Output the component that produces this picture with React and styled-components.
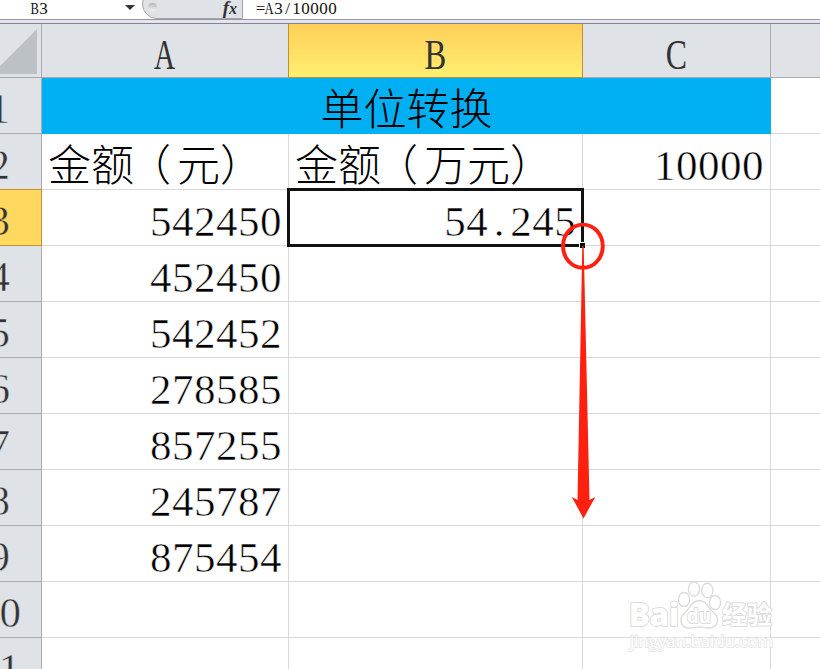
import React from "react";
import styled, { createGlobalStyle } from "styled-components";

const colors = {
  header: "#dfe2e7",
  headerLine: "#a7abb1",
  gridLine: "#d9d9d9",
  active: "#ffd95f",
  activeLine: "#c48e35",
  title: "#00b0f2",
  mark: "#ff2010",
};

const serif = `"Liberation Serif", "Noto Sans CJK SC", serif`;

const columns = [
  { name: "A", scale: 0.68 },
  { name: "B", scale: 0.76, active: true },
  { name: "C", scale: 0.74 },
  { name: "" },
];

const rows = [
  { id: 1, title: "单位转换" },
  { id: 2, a: "金额（元）", b: "金额（万元）", c: "10000", text: true },
  { id: 3, a: "542450", b: "54.245", active: true },
  { id: 4, a: "452450" },
  { id: 5, a: "542452" },
  { id: 6, a: "278585" },
  { id: 7, a: "857255" },
  { id: 8, a: "245787" },
  { id: 9, a: "875454" },
  { id: 10 },
  { id: 11 },
];

// every latin character takes the same half-width slot
const HalfWidth = ({ children, size }) =>
  children.split("").map((char, i) => (
    <Slot key={i} $size={size}>
      <Glyph $scale={/[A-Z]/.test(char) ? 0.74 : 1}>{char}</Glyph>
    </Slot>
  ));

// the opening bracket sits nearer to the middle of its box
const Label = ({ children }) =>
  children
    .split(/(（)/)
    .map((part, i) => (part === "（" ? <Bracket key={i}>{part}</Bracket> : part));

const FormulaBar = () => (
  <Bar>
    <NameBox>
      <HalfWidth size={9}>B3</HalfWidth>
    </NameBox>
    <DropArrow />
    <FxArea>
      <Knob />
      <Fx>
        f<sub>x</sub>
      </Fx>
    </FxArea>
    <Formula>
      <HalfWidth size={9}>=A3/10000</HalfWidth>
    </Formula>
  </Bar>
);

const SheetRow = ({ row }) => (
  <>
    <RowHead $active={row.active}>{row.id}</RowHead>
    {row.title ? (
      <TitleCell>{row.title}</TitleCell>
    ) : (
      <>
        <Cell $label={row.text}>{row.text ? <Label>{row.a}</Label> : row.a}</Cell>
        <Cell $label={row.text}>
          {row.active && <HalfWidth size={22}>{row.b}</HalfWidth>}
          {row.text && <Label>{row.b}</Label>}
          {row.active && (
            <Selection>
              <Handle />
            </Selection>
          )}
        </Cell>
        <Cell>{row.c}</Cell>
      </>
    )}
    <Cell />
  </>
);

const DragMark = () => (
  <Mark width="50" height="306" viewBox="558 218 50 306">
    <ellipse cx="582.9" cy="246.2" rx="19.9" ry="21.6" fill="none" stroke={colors.mark} strokeWidth="3.9" />
    <path
      d="M582.3 246 H583.7 L589.5 500 L595.3 497 L583.5 518.5 L571.8 497 L577.5 500 Z"
      fill={colors.mark}
    />
  </Mark>
);

const Watermark = () => (
  <Logo width="160" height="80" viewBox="624 576 160 80">
    <g fill="#fff" stroke="#dcdcdc" strokeWidth="1.4">
      <ellipse cx="684" cy="599.5" rx="5.6" ry="7" />
      <ellipse cx="694" cy="589" rx="5.6" ry="7.2" />
      <ellipse cx="707.3" cy="590.5" rx="5.6" ry="7.2" />
      <ellipse cx="715" cy="602.5" rx="5.6" ry="7" />
      <path d="M699 600.500 C691 601 690 609 684.500 613 C678 619 681 628 689 628 C695 628 695 627 699 627 C703 627 703 628 709 628 C718 628 720 618 714 613 C708 608 707 601 699 600.500 Z" />
    </g>
    <g fill="#fff" stroke="#dcdcdc" strokeWidth="2" paintOrder="stroke" strokeLinejoin="round">
      <text x="629" y="626" fontSize="32" fontWeight="800" textLength="50" lengthAdjust="spacingAndGlyphs">
        Bai
      </text>
      <text x="687" y="623" fontSize="20" fontWeight="700" textLength="24" lengthAdjust="spacingAndGlyphs">
        du
      </text>
      <text x="722" y="624" fontSize="25" fontWeight="700" textLength="50" lengthAdjust="spacingAndGlyphs">
        经验
      </text>
      <text x="630" y="647" fontSize="17" textLength="143" stroke="#e8e8e8" lengthAdjust="spacingAndGlyphs">
        jingyan.baidu.com
      </text>
    </g>
  </Logo>
);

const App = () => (
  <Window>
    <GlobalStyle />
    <FormulaBar />
    <Divider />
    <Sheet>
      <Corner>
        <Triangle />
      </Corner>
      {columns.map(({ name, scale, active }) => (
        <ColumnHead key={name} $active={active}>
          <Glyph $scale={scale}>{name}</Glyph>
        </ColumnHead>
      ))}
      {rows.map((row) => (
        <SheetRow key={row.id} row={row} />
      ))}
    </Sheet>
    <DragMark />
    <Watermark />
  </Window>
);

const GlobalStyle = createGlobalStyle`
  * {
    box-sizing: border-box;
  }
  body {
    margin: 0;
    overflow: hidden;
  }
`;

const Window = styled.div`
  position: relative;
  width: 820px;
  height: 669px;
  overflow: hidden;
  background: #fff;
  font-family: ${serif};
`;

const Bar = styled.div`
  display: flex;
  height: 19px;
  font-size: 17px;
  line-height: 17px;
  color: #111;
`;

const NameBox = styled.div`
  width: 125px;
  padding-left: 30px;
`;

const DropArrow = styled.div`
  width: 10px;
  height: 5px;
  margin: 5px 7px 0 0;
  background: #333;
  clip-path: polygon(0 0, 100% 0, 50% 100%);
`;

const FxArea = styled.div`
  display: flex;
  justify-content: space-between;
  width: 101px;
  height: 30px;
  margin-top: -11px;
  padding: 11px 5px 0;
  background: #dfe2e7;
  border: 1px solid #a3a7ad;
  border-radius: 15px 0 0 15px;
`;

const Knob = styled.div`
  width: 9px;
  height: 8px;
  margin-top: 2px;
  border-radius: 4px;
  background: linear-gradient(#b4b6ba, #f2f2f3);
`;

const Fx = styled.div`
  font-size: 19px;
  font-style: italic;
  font-weight: 700;
  line-height: 13px;
  color: #333;
  sub {
    font-size: 16px;
    line-height: 0;
    vertical-align: 0;
  }
`;

const Formula = styled.div`
  padding-left: 13px;
`;

const Divider = styled.div`
  height: 5px;
  background: #e3e4f0;
  border-top: 1px solid #95979c;
  border-bottom: 1px solid #80848d;
`;

// the row headings run past the left edge, so half of them stays hidden
const Sheet = styled.div`
  display: grid;
  grid-template-columns: 84px 247px 294px 188px 60px;
  grid-template-rows: 54px;
  grid-auto-rows: 56px;
  width: 873px;
  margin-left: -42px;
  font-size: 43px;
  line-height: 64px;
  letter-spacing: 0.5px;
`;

const Corner = styled.div`
  display: flex;
  justify-content: flex-end;
  padding: 5px 4px 0 0;
  background: ${colors.header};
  border-right: 1px solid ${colors.headerLine};
  border-bottom: 1px solid ${colors.headerLine};
`;

const Triangle = styled.div`
  width: 45px;
  height: 45px;
  background: #bcc1c5;
  clip-path: polygon(100% 0, 100% 100%, 0 100%);
`;

const ColumnHead = styled.div`
  display: flex;
  justify-content: center;
  background: ${(props) => (props.$active ? "linear-gradient(#ffce58, #ffef72)" : colors.header)};
  border-right: 1px solid ${(props) => (props.$active ? colors.activeLine : colors.headerLine)};
  border-bottom: 1px solid ${(props) => (props.$active ? colors.activeLine : colors.headerLine)};
  box-shadow: ${(props) => (props.$active ? `-1px 0 ${colors.activeLine}` : "none")};
  color: #333;
  line-height: 62px;
`;

const RowHead = styled.div`
  background: ${(props) => (props.$active ? colors.active : colors.header)};
  border-right: 1px solid ${(props) => (props.$active ? colors.activeLine : colors.headerLine)};
  border-bottom: 1px solid ${(props) => (props.$active ? colors.activeLine : colors.headerLine)};
  box-shadow: ${(props) => (props.$active ? `0 -1px ${colors.activeLine}` : "none")};
  color: #333;
  line-height: 62px;
  text-align: center;
  -webkit-text-stroke: 0.5px ${(props) => (props.$active ? colors.active : colors.header)};
`;

const Cell = styled.div`
  position: relative;
  padding: 0 6px;
  border-right: 1px solid ${colors.gridLine};
  border-bottom: 1px solid ${colors.gridLine};
  color: #000;
  font-weight: ${(props) => (props.$label ? 300 : 400)};
  line-height: ${(props) => (props.$label ? 66 : 64)}px;
  text-align: ${(props) => (props.$label ? "left" : "right")};
  letter-spacing: ${(props) => (props.$label ? 0 : 0.5)}px;
  white-space: nowrap;
  -webkit-text-stroke: ${(props) => (props.$label ? 0 : 0.5)}px #fff;
`;

const TitleCell = styled.div`
  grid-column: 2 / 5;
  background: ${colors.title};
  color: #000;
  font-weight: 300;
  letter-spacing: 0;
  line-height: 65px;
  text-align: center;
`;

const Slot = styled.span`
  display: inline-flex;
  justify-content: center;
  width: ${(props) => props.$size}px;
  letter-spacing: 0;
`;

const Glyph = styled.span`
  display: inline-block;
  transform: scaleX(${(props) => props.$scale || 1});
`;

const Bracket = styled.span`
  display: inline-block;
  transform: translateX(-6px);
`;

const Selection = styled.div`
  position: absolute;
  inset: -2px;
  border: 3px solid #111;
  z-index: 1;
`;

const Handle = styled.div`
  position: absolute;
  right: -5px;
  bottom: -5px;
  width: 7px;
  height: 7px;
  background: #000;
  border: 1px solid #fff;
`;

const Mark = styled.svg`
  position: absolute;
  left: 558px;
  top: 218px;
  z-index: 2;
`;

const Logo = styled.svg`
  position: absolute;
  left: 624px;
  top: 576px;
  font-family: "Open Sans", "Noto Sans CJK SC", sans-serif;
`;

export default App;
